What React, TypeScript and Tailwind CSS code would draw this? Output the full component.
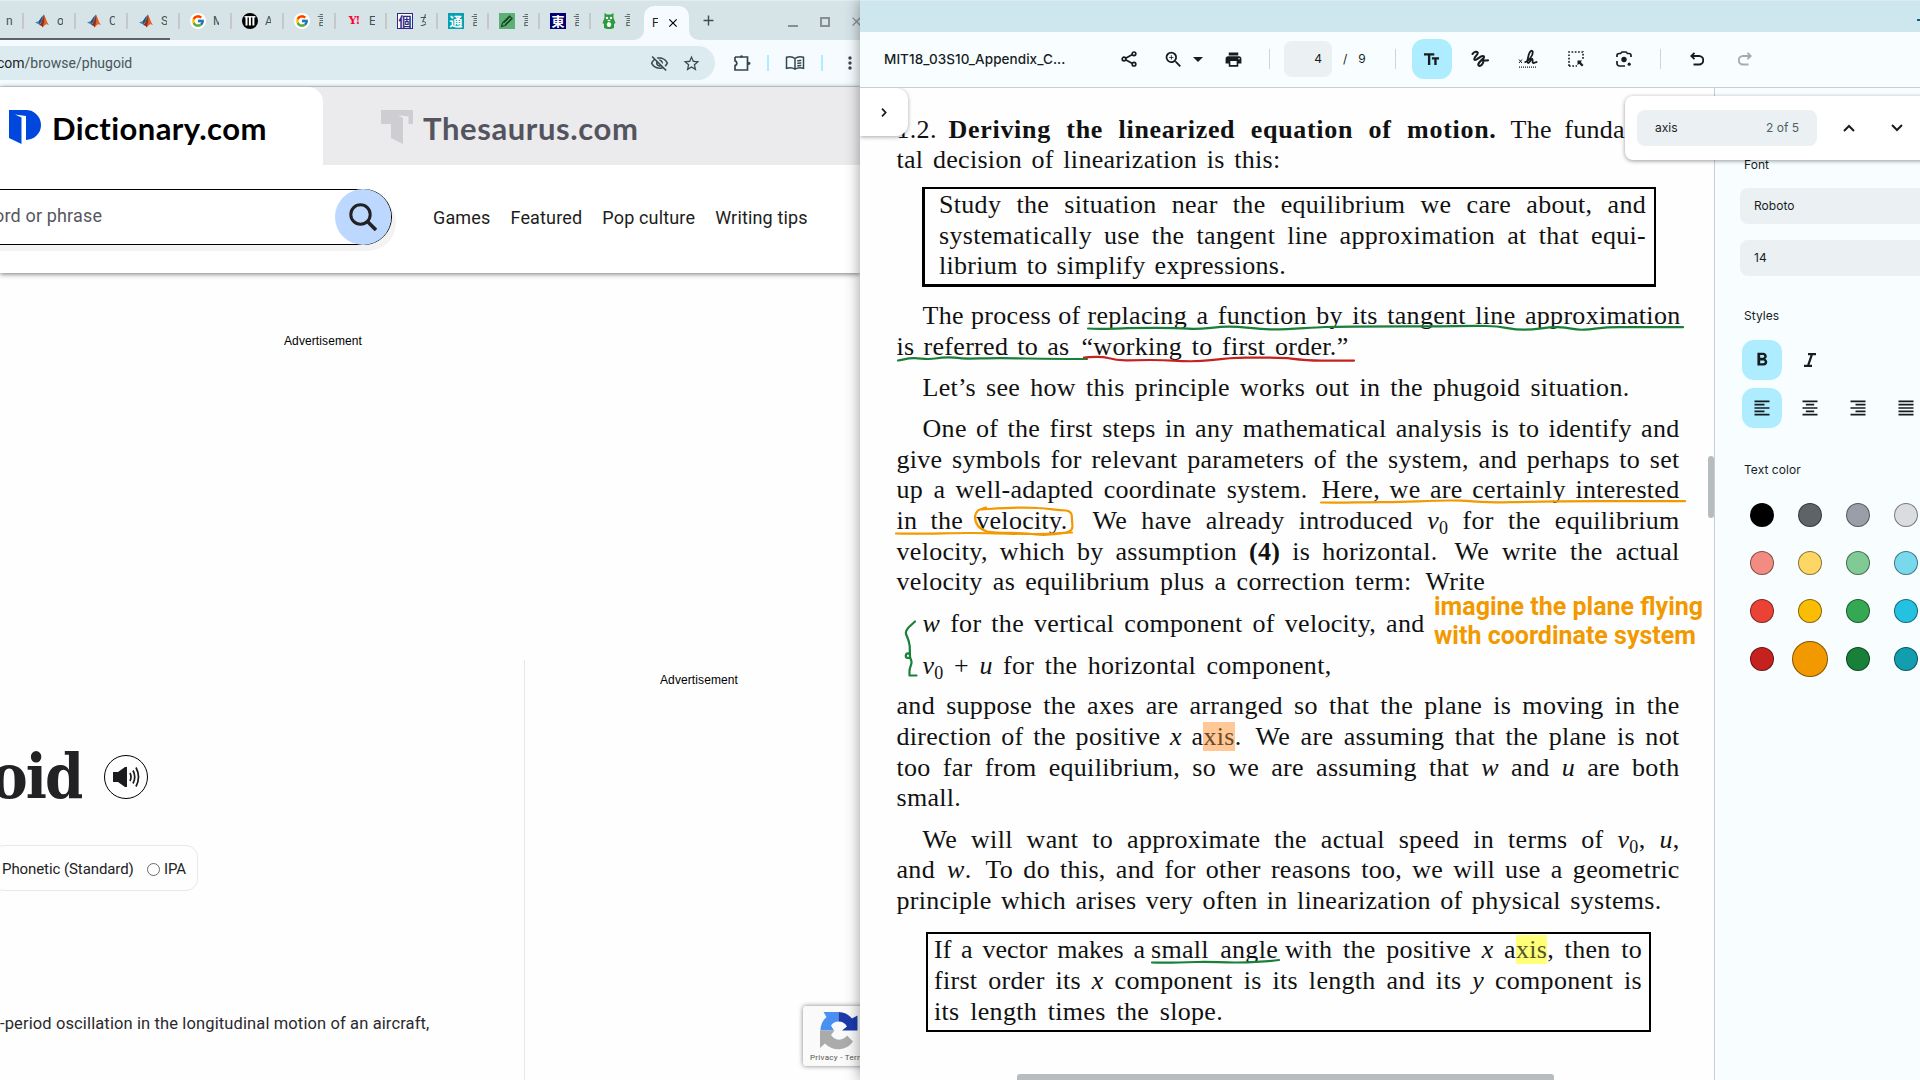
import React from "react";
import {
  MdAdd, MdArrowDropDown, MdClose, MdFormatAlignCenter, MdFormatAlignJustify, MdFormatAlignLeft,
  MdFormatAlignRight, MdFormatBold, MdMoreVert, MdOutlineVisibilityOff, MdPrint,
  MdStarBorder, MdTextFields, MdZoomIn,
} from "react-icons/md";
import { FcGoogle } from "react-icons/fc";

/* ---------- favicons ---------- */

const Matlab = () => (
  <svg viewBox="0 0 16 16" className="size-4">
    <path d="M1 9.500 5 8l3.200-4.800L10 1.500 9 7l-3.500 5-1.200-1z" fill="#3f7fb5" />
    <path d="M5 8l3.200-4.800-1 5-2 2.800z" fill="#25506f" />
    <path d="M5.300 12C7 11.600 8 9 8.800 5.500L10 1.500c1.500 2.500 2.600 7.500 5 10.500-2.500-1.200-3-1-4.500.4L8.600 14.400C8 12.600 7 12.300 5.300 12z" fill="#e4622a" />
    <path d="M10 1.500c.3 3 .9 7-1.400 12.900C8 12.600 7 12.300 5.300 12 8 10 8.800 6 10 1.500z" fill="#8c2f1c" />
  </svg>
);
const GoogleIcon = () => (
  <span className="flex size-4 items-center justify-center rounded-full bg-white"><FcGoogle size={14} /></span>
);
const Wordmark = () => (
  <svg viewBox="0 0 16 16" className="size-4">
    <circle cx="8" cy="8" r="8" fill="#000" />
    <path d="M2.500 3.800h11" stroke="#fff" strokeWidth="1.300" />
    <path d="M4.500 3.500v9M7.900 3.500v9M11.400 3.500v9" stroke="#fff" strokeWidth="2" />
  </svg>
);
const Yahoo = () => (
  <span className="flex h-4 w-4 items-center justify-center font-['DejaVu_Serif'] text-[11px] leading-none font-bold tracking-[-1px] text-[#ff0033]">Y!</span>
);
const Kanji = ({ c, k }: { c: string; k: string }) => (
  <span className={`flex size-4 items-center justify-center font-['Noto_Sans_CJK_JP'] text-[13px] leading-none font-bold ${k}`}>{c}</span>
);
const Pencil = () => (
  <svg viewBox="0 0 16 16" className="size-4">
    <path fill="#5db075" d="M0 0h16v16H0z" />
    <path d="m2.500 13.500 1-3.500L10.500 3l2.700 2.600L6.200 12.600zM5 9.500 10.500 4M6 12l6-6" fill="none" stroke="#14401f" strokeWidth="1.100" />
  </svg>
);
const Bear = () => (
  <svg viewBox="0 0 16 16" className="size-4">
    <path d="M3.500 0 6 1.500h4L12.500 0v5l2 5-1.500 1v4l-3 1H6l-3-1v-4l-1.500-1 2-5z" fill="#2b9a3e" />
    <ellipse cx="8" cy="11.500" rx="2.200" ry="2.500" fill="#fff" />
    <circle cx="6" cy="5" r="1.200" fill="#fff" /><circle cx="10" cy="5" r="1.200" fill="#fff" />
    <ellipse cx="8" cy="7.500" rx="1.500" ry=".8" fill="#fff" />
  </svg>
);

const tabs: { icon: React.ReactNode; t: string; w: string }[] = [
  { icon: <Matlab />, t: "o", w: "w-[52px]" },
  { icon: <Matlab />, t: "C", w: "w-[52px]" },
  { icon: <Matlab />, t: "S", w: "w-[52px]" },
  { icon: <GoogleIcon />, t: "M", w: "w-[52px]" },
  { icon: <Wordmark />, t: "A", w: "w-[52px]" },
  { icon: <GoogleIcon />, t: "言", w: "w-[52px]" },
  { icon: <Yahoo />, t: "E", w: "w-[51px]" },
  { icon: <Kanji c="個" k="bg-white text-[#2d2a86] border border-[#2d2a86]" />, t: "女", w: "w-[51px]" },
  { icon: <Kanji c="通" k="bg-[#06a0b0] text-white" />, t: "言", w: "w-[51px]" },
  { icon: <Pencil />, t: "言", w: "w-[51px]" },
  { icon: <Kanji c="東" k="bg-[#000070] text-white" />, t: "言", w: "w-[51px]" },
  { icon: <Bear />, t: "言", w: "w-[55px]" },
];

/* ---------- browser window ---------- */

function TabStrip() {
  return (
    <div className="relative flex h-10 shrink-0 items-center overflow-hidden border-t border-[#e2edf0] bg-[#d6e4e8] font-[Roboto,'Noto_Sans_CJK_JP',sans-serif] text-[12px] text-[#3f5358]">
      <span className="w-[22px] shrink-0 pl-[6px]">n</span>
      {tabs.map((t, i) => (
        <div key={i} className={`flex shrink-0 items-center ${t.w}`}>
          <span className="h-4 w-[2px] shrink-0 bg-[#c4c8ca]" />
          <span className="ml-[10px] w-4 shrink-0">{t.icon}</span>
          <span className="ml-[7px] w-[6px] shrink-0 overflow-hidden">{t.t}</span>
        </div>
      ))}
      <div className="relative flex h-[34px] w-[45px] shrink-0 items-center self-end rounded-t-[10px] bg-[#f5fbfe] pl-2 text-[#1c2426]">
        <span className="w-[6px] overflow-hidden">F</span>
        <MdClose size={14} className="ml-2 shrink-0 text-black" />
        <svg viewBox="0 0 10 10" className="absolute bottom-0 -left-[10px] size-[10px]"><path d="M10 0v10H0A10 10 0 0 0 10 0z" fill="#f5fbfe" /></svg>
        <svg viewBox="0 0 10 10" className="absolute -right-[10px] bottom-0 size-[10px]"><path d="M0 0v10h10A10 10 0 0 1 0 0z" fill="#f5fbfe" /></svg>
      </div>
      <MdAdd size={17} className="ml-[11px] shrink-0 text-[#3f4d51]" />
      <span className="mt-[11px] ml-[71px] h-[2px] w-[10px] shrink-0 bg-[#858f92]" />
      <span className="mt-[2px] ml-[22px] size-[10px] shrink-0 border-2 border-[#858f92]" />
      <MdClose size={15} className="mt-[2px] ml-[19px] shrink-0 text-[#858f92]" />
      <span className="absolute bottom-0 left-0 h-[2px] w-[170px] bg-[#5f6368]" />
    </div>
  );
}

function AddressBar() {
  return (
    <div className="flex h-[47px] shrink-0 items-center border-b border-[#d3e1e5] bg-[#f5fbfe] text-[#3b4a4e]">
      <div className="flex h-[34px] w-[715px] shrink-0 items-center rounded-r-full bg-[#dcebef]">
        <span className="-ml-[3px] w-[653px] font-[Roboto] text-[14px] text-[#46565a]"><span className="text-[#1c2426]">com</span>/browse/phugoid</span>
        <MdOutlineVisibilityOff size={19} />
        <MdStarBorder size={19} className="ml-[13px]" />
      </div>
      <svg viewBox="0 0 18 18" className="ml-[18px] size-[18px] shrink-0" fill="none" stroke="#33474c" strokeWidth="1.700">
        <path d="M2 3h12.500v3.500M2 3v3.800c2.300.3 2.600 4.200 0 4.700V16h12.500v-3.500M14.500 6v7" />
        <circle cx="8.500" cy="2.500" r="1.300" fill="#33474c" stroke="none" /><circle cx="15.800" cy="9.300" r="1.600" fill="#33474c" stroke="none" />
      </svg>
      <span className="ml-[16px] h-4 w-[2px] shrink-0 bg-[#aeecff]" />
      <svg viewBox="0 0 20 16" className="ml-4 h-4 w-5 shrink-0" fill="none" stroke="#33474c" strokeWidth="1.500">
        <path d="M10 3.500C7.500 1.500 4 1.500 1.500 2.300v11c3-.8 6-.8 8.500.9 2.500-1.700 5.500-1.700 8.500-.9v-11C16 1.500 12.500 1.500 10 3.500zM10 3.500V14M12.300 6q2-.9 4-.5M12.300 8.500q2-.9 4-.5M12.300 11q2-.9 4-.5" />
      </svg>
      <span className="ml-4 h-4 w-[2px] shrink-0 bg-[#aeecff]" />
      <MdMoreVert size={20} className="ml-[17px] shrink-0" />
    </div>
  );
}

function SiteHeader() {
  return (
    <header className="relative shrink-0 bg-white shadow-[0_1px_5px_rgba(0,0,0,0.55)]">
      <div className="flex h-[78px] bg-[#ebebed] font-[Lato]">
        <div className="flex w-[323px] items-center rounded-tr-[15px] bg-white pt-px pl-[9px]">
          <svg viewBox="0 0 32 34" className="h-[34px] w-8">
            <path d="M0 0h17a15 15 0 0 1 0 30V6L6 4.500l6.500 3V34L0 28z" fill="#0048dd" />
          </svg>
          <span className="mt-[3px] ml-[11px] text-[31px] leading-none font-bold tracking-[0.400px] text-black">Dictionary.com</span>
        </div>
        <div className="flex items-center pt-px pl-[58px]">
          <svg viewBox="0 0 32 34" className="h-[34px] w-8">
            <path d="M0 0h32v14h-4.500V6.500L17 5l5 3v26L10 28V14H0z" fill="#cdcdd2" />
          </svg>
          <span className="mt-[3px] ml-[10px] text-[31px] leading-none font-bold tracking-[0.600px] text-[#54545f]">Thesaurus.com</span>
        </div>
      </div>
      <div className="flex h-[108px] items-center pb-[4px] font-[Roboto] text-[18px] tracking-[0.160px] text-[#1d1d20]">
        <div className="-ml-2 flex h-14 w-[400px] items-center justify-between rounded-r-full border border-black pl-px text-[#56565f] shadow-[4px_6px_0_#f3f3f4]">
          <span className="pb-[3px]">ord or phrase</span>
          <span className="flex size-[56px] items-center justify-center rounded-full bg-[#bdd8ff]">
            <svg viewBox="0 0 28 28" className="size-[28px]" fill="none" stroke="#222225" strokeWidth="3">
              <circle cx="11.500" cy="11.500" r="9.700" /><path d="m18.500 18.500 8.500 8.500" strokeWidth="3.600" />
            </svg>
          </span>
        </div>
        <span className="ml-[41px]">Games</span>
        <span className="ml-[20px]">Featured</span>
        <span className="ml-[20px]">Pop culture</span>
        <span className="ml-[20px]">Writing tips</span>
      </div>
    </header>
  );
}

function Browser() {
  return (
    <div className="flex w-[860px] shrink-0 flex-col overflow-hidden bg-[#fefefe] whitespace-nowrap">
      <TabStrip />
      <AddressBar />
      <SiteHeader />
      <div className="relative flex grow">
        <div className="flex w-[524px] flex-col overflow-hidden">
          <span className="mt-[60px] w-[646px] text-center font-['Liberation_Sans'] text-[12px] leading-4 tracking-[0.100px] text-black">Advertisement</span>
          <div className="mt-[388px] flex h-[80px] items-center">
            <div className="flex w-[82px] justify-end overflow-hidden">
              <span className="font-['DejaVu_Serif'] text-[62px] leading-[70px] font-bold tracking-[-2px] text-[#222225] [font-stretch:condensed]">phugoid</span>
            </div>
            <span className="ml-[22px] flex size-11 items-center justify-center rounded-full border border-black">
              <svg viewBox="0 0 28 22" className="ml-[2px] h-[22px] w-[28px]">
                <path d="M0 6h5l7-5h2v20h-2l-7-5H0z" fill="#1b1b1e" />
                <path d="M17 7q2 4 0 8M20 4.500q3.500 6.500 0 13M23 1.500q5 9.500 0 19" fill="none" stroke="#1b1b1e" strokeWidth="1.700" />
              </svg>
            </span>
          </div>
          <div className="mt-[28px] -ml-2 flex h-[46px] w-[206px] items-center rounded-[12px] border border-[#e8e8ea] pt-[2px] pl-[9px] font-[Roboto] text-[15px] tracking-[-0.080px] text-[#222225]">
            <span className="w-[131px]">Phonetic (Standard)</span>
            <span className="ml-[14px] size-[13px] rounded-full border border-[#6b6b6f]" />
            <span className="ml-1">IPA</span>
          </div>
          <span className="mt-[121px] font-[Roboto] text-[16.500px] leading-6 tracking-[0.120px] text-[#2a2a2d]">-period oscillation in the longitudinal motion of an aircraft,</span>
        </div>
        <div className="mt-[387px] w-[336px] border-l border-[#e8e8ea] pt-[12px] pl-[13px] text-center font-['Liberation_Sans'] text-[12px] leading-4 tracking-[0.100px] text-black">
          Advertisement
        </div>
        <div className="absolute top-[733px] left-[803px] flex h-[60px] w-[90px] flex-col rounded-[3px] bg-[#fafafa] pt-[6px] pl-[7px] shadow-[0_0_5px_#808080]">
          <svg viewBox="0 0 38 38" className="ml-[10px] h-[38px] w-[38px]">
            <path d="M18.500 0v9.500a9.500 9.500 0 0 0-7.500 4L14 18.500H.5A18 18 0 0 1 6.500 5L3.500 0z" fill="#4a90f0" />
            <path d="M18.500 0A18 18 0 0 1 32 6.500L37.500 3.500v15H22l5-4a10 10 0 0 0-8.500-5z" fill="#1c3aa9" />
            <path d="M0 18.500h14.500L11 23a9.500 9.500 0 0 0 16 .5l6 6A18 18 0 0 1 5 31.500L0 36z" fill="#ababab" />
          </svg>
          <span className="mt-[2px] font-[Roboto] text-[8px] leading-[11px] tracking-[0.300px] text-[#555]">Privacy - Terms</span>
        </div>
      </div>
    </div>
  );
}

/* ---------- PDF viewer ---------- */

const Divider = () => <span className="h-5 w-px bg-[#ccd5d8]" />;

function PdfToolbar() {
  return (
    <div className="flex h-14 shrink-0 items-center border-b border-[#c7cfd2] bg-[#f8fdff] pb-px font-[Inter] text-[#171d1f]">
      <span className="ml-6 w-[237px] text-[13.500px] font-medium tracking-[0.060px]">MIT18_03S10_Appendix_C...</span>
      <svg viewBox="0 0 16 16" className="size-4" fill="none" stroke="#171d1f" strokeWidth="1.700">
        <circle cx="13" cy="2.800" r="1.800" /><circle cx="3" cy="8" r="1.800" /><circle cx="13" cy="13.200" r="1.800" /><path d="m4.600 7.200 6.800-3.600M4.600 8.800l6.800 3.600" />
      </svg>
      <MdZoomIn size={21} className="ml-[26px]" />
      <MdArrowDropDown size={24} className="ml-[2px]" />
      <MdPrint size={19} className="ml-[14px]" />
      <span className="w-[26px]" />
      <Divider />
      <span className="ml-[14px] flex h-9 w-12 items-center justify-end rounded-lg bg-[#ebf0f3] pr-[10px] text-[12px]">4</span>
      <span className="ml-[11px] text-[12px]">/</span>
      <span className="mr-[29px] ml-[11px] text-[12px]">9</span>
      <Divider />
      <span className="ml-[16px] flex size-10 items-center justify-center rounded-[12px] bg-[#aeecff]"><MdTextFields size={19} /></span>
      <svg viewBox="0 0 18 18" className="ml-[19px] size-[18px]" fill="none" stroke="#171d1f" strokeWidth="2.100" strokeLinecap="round">
        <path d="M1.500 4C3 1.500 6.500 1 6.700 3 7 5 2 7.500 3.500 9.700c1.600 2 6.500-5.200 9-3.500 2.600 2-7 6.300-5 9 2 2.300 5.500-2 4.800-5.400M12.300 9.800c1.300.8 3 .9 4.700.4" />
      </svg>
      <svg viewBox="0 0 20 20" className="ml-[29px] size-5" fill="none" stroke="#171d1f" strokeWidth="1.800">
        <path d="m1 10.500 3 3.500M4 10.500 1 14" strokeWidth="1" />
        <path d="M6.500 13.500c4.500-1.500 8.500-7 8.300-10.500C14.600.8 12 1.500 10.800 5.500 9.600 10 8.800 14 10.300 14s2.200-4 3.700-4c1.300 0-.2 4 1.300 4s2-.9 4-1.200" />
        <path d="M1 18.200h18" strokeWidth="1.200" strokeDasharray="1 1" />
      </svg>
      <svg viewBox="0 0 16 16" className="ml-[30px] size-4" fill="none" stroke="#171d1f" strokeWidth="1.600">
        <path d="M1 15V1h14v8M1 15h8" strokeDasharray="1.700 1.600" /><path d="M9.500 9.500h4.800l-1.600 1.600 2.800 2.800-1.600 1.600-2.800-2.800-1.600 1.600z" fill="#171d1f" stroke="none" />
      </svg>
      <svg viewBox="0 0 16 16" className="ml-[32px] size-4" fill="none" stroke="#171d1f" strokeWidth="1.700">
        <path d="M1 6V4.500A2 2 0 0 1 3 2.500h1.500L6 1h4l1.500 1.500H13a2 2 0 0 1 2 2V6M1 10v2.500a2.500 2.500 0 0 0 2.500 2.500H9" />
        <circle cx="8" cy="8.500" r="2.700" fill="#171d1f" stroke="none" /><circle cx="13.200" cy="13.200" r="1.600" fill="#171d1f" stroke="none" />
      </svg>
      <span className="w-[28px]" />
      <Divider />
      <svg viewBox="0 0 14 14" className="ml-[29px] size-[14px]" fill="none" stroke="#171d1f" strokeWidth="1.900"><path d="M4.500.8 1.300 4l3.200 3.200M1.500 4H9a3.700 3.700 0 0 1 0 8.500H3.500" /></svg>
      <svg viewBox="0 0 14 14" className="ml-[34px] size-[14px]" fill="none" stroke="#a5abad" strokeWidth="1.900"><path d="M9.500.8 12.700 4 9.500 7.200M12.500 4H5a3.700 3.700 0 0 0 0 8.500h5.500" /></svg>
    </div>
  );
}

/* A typeset line: segments are stretched to their measure. */
const Row = ({ k = "", children }: { k?: string; children: React.ReactNode }) => (
  <div className={`flex h-[30.7px] shrink-0 ${k}`}>{children}</div>
);
const S = ({ k, children }: { k: string; children: React.ReactNode }) => (
  <span className={`block shrink-0 whitespace-nowrap [text-align-last:justify] ${k}`}>{children}</span>
);
const V = () => (<><i>v</i><span className="relative top-[5px] text-[18px] leading-none">0</span></>);

function Document() {
  return (
    <div className="relative grow overflow-hidden bg-[#fefefe]">
      <div className="flex flex-col pt-[26.6px] pl-[36.500px] font-['Liberation_Serif'] text-[26px] leading-[30.7px] tracking-[0.300px] text-[#111]">
        <Row>
          <S k="w-[38px]">1.2.</S><S k="ml-[14px] w-[548px] font-bold tracking-[0.700px]">Deriving the linearized equation of motion.</S><S k="ml-[14px] w-[169px]">The fundamen-</S>
        </Row>
        <Row><S k="w-[384px]">tal decision of linearization is this:</S></Row>
        <div className="mt-[11.3px] mb-[11.4px] ml-[25.500px] flex h-[100px] w-[734px] flex-col border-2 border-b-[3px] border-l-[3px] border-black pt-[0.8px] pl-[14px]">
          <Row><S k="w-[707px]">Study the situation near the equilibrium we care about, and</S></Row>
          <Row><S k="w-[707px]">systematically use the tangent line approximation at that equi-</S></Row>
          <Row><S k="w-[347px]">librium to simplify expressions.</S></Row>
        </div>
        <div className="mt-[2.500px] flex flex-col">
          <Row k="ml-[26px]"><S k="w-[158px]">The process of</S><S k="ml-[7px] w-[593px]">replacing a function by its tangent line approximation</S></Row>
          <Row><S k="w-[173px]">is referred to as</S><S k="ml-[12px] w-[267px]">“working to first order.”</S></Row>
        </div>
        <Row k="mt-[10.4px] ml-[26px]"><S k="w-[707px]">Let’s see how this principle works out in the phugoid situation.</S></Row>
        <Row k="mt-[10.4px] ml-[26px]"><S k="w-[757px]">One of the first steps in any mathematical analysis is to identify and</S></Row>
        <Row><S k="w-[783px]">give symbols for relevant parameters of the system, and perhaps to set</S></Row>
        <Row><S k="w-[411px]">up a well-adapted coordinate system.</S><S k="ml-[14px] w-[358px]">Here, we are certainly interested</S></Row>
        <Row><S k="w-[171px]">in the velocity.</S><S k="ml-[25px] w-[587px]">We have already introduced <V /> for the equilibrium</S></Row>
        <Row><S k="w-[541px]">velocity, which by assumption <b>(4)</b> is horizontal.</S><S k="ml-[17px] w-[225px]">We write the actual</S></Row>
        <Row><S k="w-[515px]">velocity as equilibrium plus a correction term:</S><S k="ml-[14px] w-[62px]">Write</S></Row>
        <Row k="mt-[10.9px] ml-[26px]"><S k="w-[502px]"><i>w</i> for the vertical component of velocity, and</S></Row>
        <Row k="mt-[11px] ml-[26px]"><S k="w-[409px]"><V /> + <i>u</i> for the horizontal component,</S></Row>
        <Row k="mt-[10px]"><S k="w-[783px]">and suppose the axes are arranged so that the plane is moving in the</S></Row>
        <Row><S k="w-[345px]">direction of the positive <i>x</i> a<mark className="bg-[#ffc896] text-[#6a4a2c]">xis</mark>.</S><S k="ml-[14px] w-[424px]">We are assuming that the plane is not</S></Row>
        <Row><S k="w-[783px]">too far from equilibrium, so we are assuming that <i>w</i> and <i>u</i> are both</S></Row>
        <Row><S k="w-[64px]">small.</S></Row>
        <Row k="mt-[10.6px] ml-[26px]"><S k="w-[757px]">We will want to approximate the actual speed in terms of <V />, <i>u</i>,</S></Row>
        <Row><S k="w-[75px]">and <i>w</i>.</S><S k="ml-[14px] w-[694px]">To do this, and for other reasons too, we will use a geometric</S></Row>
        <Row><S k="w-[765px]">principle which arises very often in linearization of physical systems.</S></Row>
        <div className="mt-[15.600px] ml-[29.500px] flex h-[100px] w-[725px] shrink-0 flex-col border-2 border-black pt-[0.900px] pl-[6px]">
          <Row><S k="w-[211px] tracking-[0px]">If a vector makes a</S><S k="ml-[6px] w-[127px]">small angle</S><S k="ml-[7px] w-[357px]">with the positive <i>x</i> a<mark className="bg-[#ffff78] text-[#55552c]">xis</mark>, then to</S></Row>
          <Row><S k="w-[708px]">first order its <i>x</i> component is its length and its <i>y</i> component is</S></Row>
          <Row><S k="w-[289px]">its length times the slope.</S></Row>
        </div>
      </div>

      {/* pen annotations */}
      <svg viewBox="860 88 854 992" className="pointer-events-none absolute top-0 left-0 h-[992px] w-[854px]" fill="none" strokeWidth="2.200" strokeLinecap="round" strokeLinejoin="round">
        <g stroke="#188038">
          <path d="M1088 328.500c12 1 25 0 40-.300s45-.5 60 .5 25-1.800 40-2 25 2.200 42 2.600 35-1.500 55-2.300 60-.7 95-.7 45-.5 66-.3 22 3.800 38 3.700 20-2.800 34-2.500 14 3 26 2.500 15-2.500 36-2.500h63" />
          <path d="M898 360.500c6-1 10-2.500 17-2.300s12 1.600 20 .3 18-1.300 25-.3 20 0 40 0 50 1 87 .8" />
          <path d="M915 621.500 909 627c-2.500 2.500-3.500 5-3 7 1.500 4 3.300 7 3.700 12l.3 10c0 3-4.500 2.500-4.200-.5.5-3 4.500-2.700 4.200.5 0 3.500 2 4 1.500 7-.5 3-2 5-2 8v4.500h7" />
          <path d="M1152 962.500c15 .5 30 0 45-.5s25 .7 40 .5 28-.5 42-2.500" />
        </g>
        <path d="M1084 357.500c10-.5 17-1.500 24 .5s12 2.500 20 2.300 30-.7 45 .3 30 .5 38-.5 20-2.500 35-2.500 35-.2 45 1 20 2 30 2h33" stroke="#c5221f" />
        <g stroke="#f29900">
          <path d="M1321 502.500c20 .5 45-.5 65-.3s55-2.500 75-1.500 30 2 50 1.500 50-1 90-1h84M896 533.500c25 .8 50-.5 75-.5s45 1 65 1 25-1.200 36-1.500" />
          <path d="M986 507.500c-3 .5-5 2-4 2 15-1 35-3 56-1.500 12 .5 17 2 28 2.500 6 1 6 4 6 10 1 8 1 10-6 12-10 2-25 3.500-38 1-15-1-30 0-41-2-10-3-12-9-12-15 1-5 4-8 9-8" />
        </g>
      </svg>
      <div className="absolute top-[504px] left-[574px] font-[Roboto] text-[25px] leading-[29px] font-bold whitespace-nowrap text-[#f29900]">
        imagine the plane flying<br />with coordinate system
      </div>
      <div className="absolute top-0 left-0 flex h-12 w-12 items-center justify-center rounded-r-[12px] bg-white shadow-[0_1px_4px_rgba(0,0,0,0.35)]">
        <svg viewBox="0 0 6 10" className="h-[9px] w-[6px]" fill="none" stroke="#171d1f" strokeWidth="2"><path d="m.8.8 4 4.200-4 4.200" /></svg>
      </div>
      <span className="absolute top-[368px] right-0 h-[62px] w-[6px] rounded-[3px] bg-[#b7bcbf]" />
      <span className="absolute bottom-0 left-[157px] h-[6px] w-[537px] rounded-t-[3px] bg-[#b7bcbf]" />
    </div>
  );
}

const swatches = [
  "bg-[#000000]", "bg-[#5f6368]", "bg-[#9a9ea8]", "bg-[#dadce0]",
  "bg-[#f28b82]", "bg-[#fdd663]", "bg-[#81c995]", "bg-[#78d9ec]",
  "bg-[#ea4335]", "bg-[#fbbc04]", "bg-[#34a853]", "bg-[#24c1e0]",
  "bg-[#c5221f]", "bg-[#f29900]", "bg-[#188038]", "bg-[#129eaf]",
];

function SidePanel() {
  return (
    <aside className="flex w-[206px] shrink-0 flex-col overflow-hidden border-l border-[#c7cfd2] bg-[#f8fdff] pt-[69px] font-[Inter] text-[12px] leading-4 tracking-[0.050px] text-[#171d1f]">
      <span className="ml-[29px]">Font</span>
      <span className="mt-[15px] ml-[25px] flex h-9 w-[240px] items-center rounded-lg bg-[#ebf0f3] pl-[14px]">Roboto</span>
      <span className="mt-4 ml-[25px] flex h-9 w-[240px] items-center rounded-lg bg-[#ebf0f3] pl-[14px]">14</span>
      <span className="mt-[32px] ml-[29px]">Styles</span>
      <div className="mt-4 ml-[27px] grid w-[192px] grid-cols-4 gap-y-2">
        <span className="flex size-10 items-center justify-center rounded-[12px] bg-[#aeecff]"><MdFormatBold size={22} /></span>
        <span className="flex size-10 items-center justify-center">
          <svg viewBox="0 0 12 14" className="h-[14px] w-3" fill="none" stroke="#171d1f" strokeWidth="2.200"><path d="M4 1.200h8M0 12.800h8M8 1.200 4 12.800" /></svg>
        </span>
        <span /><span />
        <span className="flex size-10 items-center justify-center rounded-[12px] bg-[#aeecff]"><MdFormatAlignLeft size={20} /></span>
        <span className="flex size-10 items-center justify-center"><MdFormatAlignCenter size={20} /></span>
        <span className="flex size-10 items-center justify-center"><MdFormatAlignRight size={20} /></span>
        <span className="flex size-10 items-center justify-center"><MdFormatAlignJustify size={20} /></span>
      </div>
      <span className="mt-[34px] ml-[29px]">Text color</span>
      <div className="mt-[13px] ml-[23px] grid w-[192px] shrink-0 grid-cols-4">
        {swatches.map((c) => (
          <span key={c} className="flex size-12 items-center justify-center">
            <span className={`rounded-full border border-black/45 ${c} ${c === "bg-[#f29900]" ? "size-9" : "size-6"}`} />
          </span>
        ))}
      </div>
    </aside>
  );
}

function FindBar() {
  return (
    <div className="absolute top-[96px] left-[765px] flex h-16 w-[320px] items-center rounded-l-lg bg-white pl-3 font-[Inter] text-[#1c2426] shadow-[0_1px_4px_rgba(0,0,0,0.4)]">
      <span className="flex h-9 w-[180px] items-center justify-between rounded-lg bg-[#ebf0f3] pr-[18px] pl-[18px]">
        <span className="text-[12px]">axis</span><span className="text-[12px] text-[#4d6268]">2 of 5</span>
      </span>
      <svg viewBox="0 0 12 8" className="ml-[26px] h-2 w-3" fill="none" stroke="#171d1f" strokeWidth="2"><path d="m1 7 5-5 5 5" /></svg>
      <svg viewBox="0 0 12 8" className="ml-[36px] h-2 w-3" fill="none" stroke="#171d1f" strokeWidth="2"><path d="m1 1 5 5 5-5" /></svg>
    </div>
  );
}

export default function App() {
  return (
    <div className="flex h-[1080px] w-[1920px] overflow-hidden bg-white">
      <Browser />
      <div className="relative flex w-[1060px] shrink-0 flex-col shadow-[0_0_14px_rgba(0,0,0,0.4)]">
        <div className="flex h-8 shrink-0 justify-end border-t border-[#dcebf0] bg-[#cee7ee]"><span className="mt-[18px] h-[2px] w-[3px] bg-[#00687a]" /></div>
        <PdfToolbar />
        <div className="flex min-h-0 grow">
          <Document />
          <SidePanel />
        </div>
        <FindBar />
      </div>
    </div>
  );
}
